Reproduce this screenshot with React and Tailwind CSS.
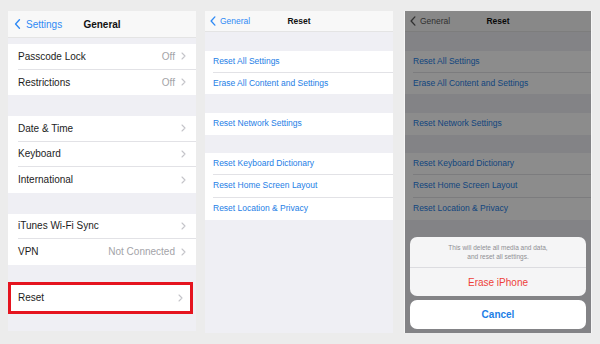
import React from 'react';

const font = { fontFamily: '"Liberation Sans", Arial, sans-serif' };

const BackChevron = ({ className }) => (
  <svg viewBox="0 0 8 13" className={className} fill="none">
    <path d="M6.5 1 L1.5 6.5 L6.5 12" stroke="currentColor" strokeWidth="1.8" strokeLinecap="round" strokeLinejoin="round" />
  </svg>
);

const RowChevron = () => (
  <svg viewBox="0 0 5 8" className="w-[5px] h-[8px] text-[#c4c4c9]" fill="none">
    <path d="M1 1 L4 4 L1 7" stroke="currentColor" strokeWidth="1.1" strokeLinecap="round" strokeLinejoin="round" />
  </svg>
);

// left panel: General settings
const GeneralRow = ({ label, value, last }) => (
  <div className="h-[25.5px] bg-white pl-[10px] flex">
    <div className={`flex-1 flex items-center pr-[10px] ${last ? '' : 'border-b border-[#e2e2e6]'}`}>
      <span className="flex-1 text-[10px] text-[#1c1c1c]">{label}</span>
      {value && <span className="text-[10px] text-[#a3a3a8] mr-[6px]">{value}</span>}
      <RowChevron />
    </div>
  </div>
);

const GeneralPanel = () => (
  <div className="w-[188px] h-[320px] bg-[#efeff4] flex flex-col">
    <div className="h-[27px] bg-[#f8f8f8] border-b border-[#e4e4e4] relative flex items-center">
      <div className="flex items-center pl-[6px] text-[#2f8af5]">
        <BackChevron className="w-[7px] h-[10px]" />
        <span className="ml-[5px] text-[10px]">Settings</span>
      </div>
      <span className="absolute left-1/2 -translate-x-1/2 text-[10px] font-bold text-[#111]">General</span>
    </div>
    <div className="h-[6px]" />
    <GeneralRow label="Passcode Lock" value="Off" />
    <GeneralRow label="Restrictions" value="Off" last />
    <div className="h-[21px]" />
    <GeneralRow label="Date & Time" />
    <GeneralRow label="Keyboard" />
    <GeneralRow label="International" last />
    <div className="h-[21px]" />
    <GeneralRow label="iTunes Wi-Fi Sync" />
    <GeneralRow label="VPN" value="Not Connected" last />
    <div className="h-[17px]" />
    <div className="h-[32px] mr-[3px] border-[3px] border-[#e5141f] bg-white pl-[7px] pr-[7px] flex items-center">
      <span className="flex-1 text-[10px] text-[#1c1c1c]">Reset</span>
      <RowChevron />
    </div>
  </div>
);

// middle & right panels: Reset screen
const ResetRow = ({ label, last, tall }) => (
  <div className={`${tall ? 'h-[22.5px]' : 'h-[21.5px]'} bg-white pl-[8px] flex`}>
    <div className={`flex-1 flex items-center ${last ? '' : 'border-b border-[#e2e2e6]'}`}>
      <span className="text-[8.5px] text-[#1d7ee6]">{label}</span>
    </div>
  </div>
);

const ResetContent = ({ dim }) => (
  <>
    <div className="h-[21px] bg-[#f8f8f8] border-b border-[#e4e4e4] relative flex items-center">
      <div className={`flex items-center pl-[5px] ${dim ? 'text-[#5a5a5a]' : 'text-[#2f8af5]'}`}>
        <BackChevron className="w-[6px] h-[10px]" />
        <span className="ml-[4px] text-[8.5px]">General</span>
      </div>
      <span className="absolute left-1/2 -translate-x-1/2 text-[8.5px] font-bold text-[#111]">Reset</span>
    </div>
    <div className="h-[19px]" />
    <ResetRow label="Reset All Settings" />
    <ResetRow label="Erase All Content and Settings" last />
    <div className="h-[19px]" />
    <ResetRow label="Reset Network Settings" last />
    <div className="h-[18px]" />
    <ResetRow label="Reset Keyboard Dictionary" tall />
    <ResetRow label="Reset Home Screen Layout" tall />
    <ResetRow label="Reset Location & Privacy" tall last />
  </>
);

const ResetPanel = () => (
  <div className="w-[188px] h-[322px] bg-[#efeff4] flex flex-col">
    <ResetContent />
  </div>
);

const ErasePanel = () => (
  <div className="w-[188px] h-[322px] bg-[#efeff4] flex flex-col relative border-x border-[#f6f6f6]">
    <ResetContent dim />
    {/* dimming overlay + action sheet */}
    <div className="absolute inset-0 bg-black/45 flex flex-col justify-end px-[5px] pb-[4px]">
      <div className="bg-[#f5f5f6] rounded-[7px] flex flex-col">
        <div className="h-[31px] flex flex-col items-center justify-center border-b border-[#dcdce0] text-[6.5px] leading-[9px] text-[#8e8e93]">
          <span>This will delete all media and data,</span>
          <span>and reset all settings.</span>
        </div>
        <div className="h-[28px] flex items-center justify-center text-[10px] text-[#ee3f3a]">Erase iPhone</div>
      </div>
      <div className="mt-[4px] h-[29px] bg-white rounded-[7px] flex items-center justify-center text-[10px] font-bold text-[#1d7ee6]">
        Cancel
      </div>
    </div>
  </div>
);

export default function App() {
  return (
    <div className="w-[600px] h-[344px] bg-[#ececec] flex items-start pt-[11px] pl-[8px]" style={font}>
      <GeneralPanel />
      <div className="ml-[9px]">
        <ResetPanel />
      </div>
      <div className="ml-[11px]">
        <ErasePanel />
      </div>
    </div>
  );
}
